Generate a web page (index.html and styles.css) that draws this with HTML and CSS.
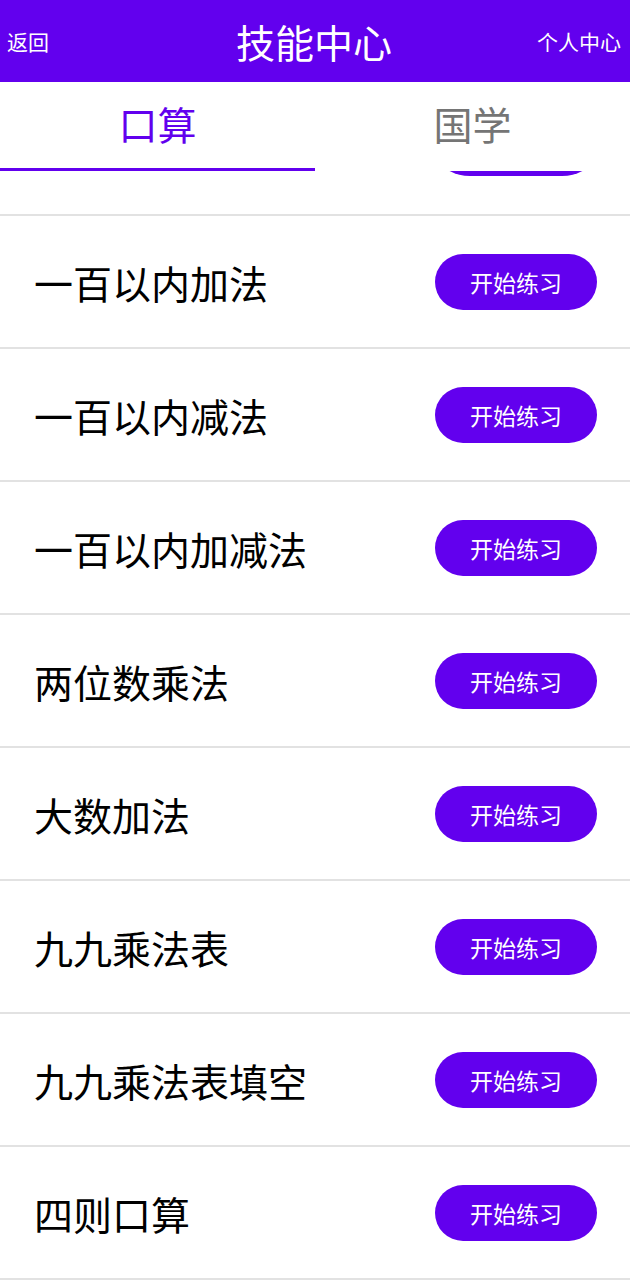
FILE: index.html
```html
<!DOCTYPE html>
<html lang="zh">
<head>
<meta charset="utf-8">
<link rel="stylesheet" href="styles.css">
</head>
<body>
<header class="topbar">
  <span class="back">返回</span>
  <span class="title">技能中心</span>
  <span class="user">个人中心</span>
</header>
<nav class="tabs">
  <div class="tab active">口算</div>
  <div class="tab">国学</div>
</nav>
<div class="list">
  <div class="row peek"><span class="btn ghost"></span></div>
  <div class="row"><span class="name">一百以内加法</span><button class="btn">开始练习</button></div>
  <div class="row"><span class="name">一百以内减法</span><button class="btn">开始练习</button></div>
  <div class="row"><span class="name">一百以内加减法</span><button class="btn">开始练习</button></div>
  <div class="row"><span class="name">两位数乘法</span><button class="btn">开始练习</button></div>
  <div class="row"><span class="name">大数加法</span><button class="btn">开始练习</button></div>
  <div class="row"><span class="name">九九乘法表</span><button class="btn">开始练习</button></div>
  <div class="row"><span class="name">九九乘法表填空</span><button class="btn">开始练习</button></div>
  <div class="row"><span class="name">四则口算</span><button class="btn">开始练习</button></div>
</div>
</body>
</html>
```
FILE: styles.css
```css
* { box-sizing: border-box; }
html, body { margin: 0; padding: 0; background: #fff; }
body {
  font-family: "Noto Sans CJK SC", "Noto Sans", sans-serif;
  width: 630px;
  height: 1280px;
  overflow: hidden;
}
.topbar {
  height: 82px;
  background: #6200ee;
  color: #fff;
  display: grid;
  grid-template-columns: 1fr auto 1fr;
  align-items: center;
  padding: 0 9px 0 7px;
}
.back { font-size: 21px; justify-self: start; }
.title { font-size: 39px; }
.user { font-size: 21px; justify-self: end; }
.tabs {
  height: 89px;
  display: flex;
  background: #fff;
}
.tab {
  flex: 1;
  display: flex;
  align-items: center;
  justify-content: center;
  font-size: 39px;
  color: #757575;
  padding-bottom: 5px;
  border-bottom: 3px solid transparent;
}
.tab.active { color: #6200ee; border-bottom-color: #6200ee; }
.list {
  height: 1109px;
  overflow: hidden;
}
.row {
  height: 133px;
  display: flex;
  align-items: center;
  justify-content: space-between;
  padding: 0 33px 0 34px;
  border-bottom: 2px solid #e2e2e2;
}
.row.peek {
  height: 45px;
  overflow: hidden;
  align-items: flex-end;
  justify-content: flex-end;
  padding-bottom: 38px;
  padding-right: 40px;
}
.name { font-size: 39px; color: #000; }
.btn {
  width: 162px;
  height: 56px;
  border: none;
  border-radius: 28px;
  background: #6200ee;
  color: #fff;
  font-family: inherit;
  font-size: 23px;
  padding: 0;
  flex-shrink: 0;
}
.btn.ghost {
  display: block;
  width: 148px;
  height: 20px;
  border-radius: 0 0 28px 28px / 0 0 16px 16px;
}
```
